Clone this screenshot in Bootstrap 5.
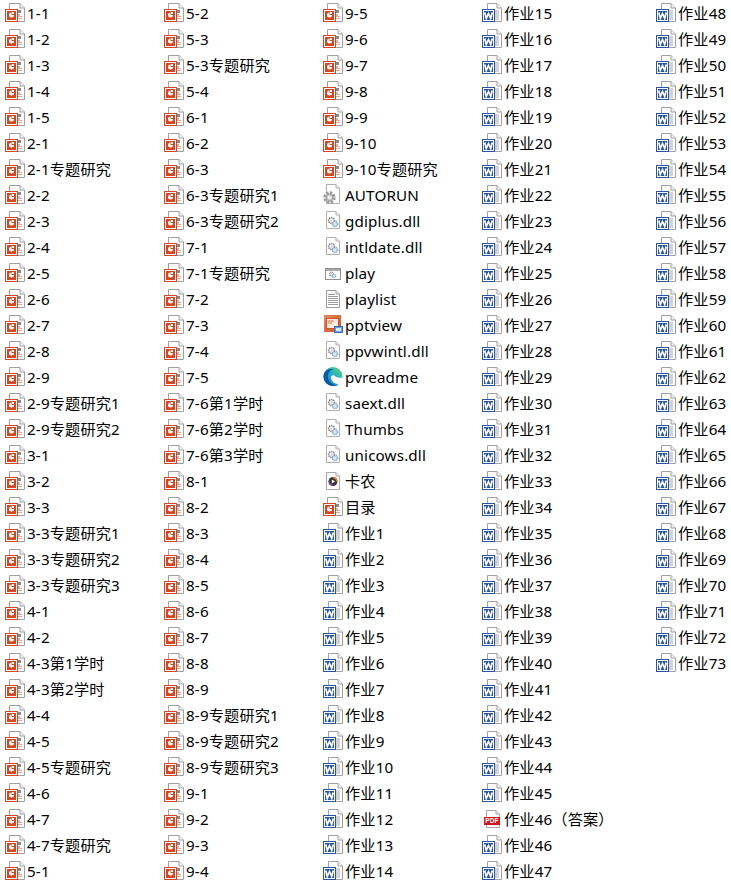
<!DOCTYPE html>
<html lang="zh">
<head>
<meta charset="utf-8">
<title>文件列表</title>
<link href="https://cdn.jsdelivr.net/npm/bootstrap@5.3.0/dist/css/bootstrap.min.css" rel="stylesheet">
<style>
html,body{margin:0;background:#fff;overflow:hidden}
.sheet{width:731px;height:884px;padding-top:1px;font:15.2px/24px "Noto Sans","Noto Sans CJK SC",sans-serif;letter-spacing:.15px;color:#000}
.lane{width:159px;flex:none}
.lane-wide{width:174px}
.lane-last{width:80px}
.entry{height:26px;white-space:nowrap}
.glyph{width:24px;height:26px;flex:none;margin-left:3px}
</style>
</head>
<body>
<svg width="0" height="0" class="position-absolute">
<defs>
<symbol id="sp" viewBox="0 0 24 26"><path d="M6.500 2.500H17L21.500 7V20.500H6.500Z" fill="#fff" stroke="#a0a0a0"/><path d="M17 2.500V7H21.500" fill="#f3f3f3" stroke="#a0a0a0"/><rect x="15" y="9" width="3" height="3" fill="#8a8a8a"/><rect x="15" y="13" width="2" height="2" fill="#bbb"/><rect x="15" y="15" width="4" height="1" fill="#eda58e"/><rect x="15" y="17" width="4" height="1" fill="#eda58e"/><rect x="2.500" y="8.500" width="12" height="12" fill="#fff" stroke="#d24726"/><rect x="4" y="10" width="9" height="9" fill="#d24726"/><circle cx="8.500" cy="14" r="2.500" fill="#fff"/><path d="M8.500 14V11.500H11V14Z" fill="#d24726"/><rect x="9" y="11" width="2" height="2" fill="#fff"/></symbol>
<symbol id="wd" viewBox="0 0 24 26"><path d="M7.500 2.500H17L21.500 7V20.500H7.500Z" fill="#fff" stroke="#a0a0a0"/><path d="M17 2.500V7H21.500" fill="#f3f3f3" stroke="#a0a0a0"/><path d="M15 10h4M15 12h4M15 14h4M15 16h4M15 18h4" stroke="#a6a6a6"/><rect x="2.500" y="8.500" width="12" height="12" fill="#fff" stroke="#2b579a"/><rect x="4" y="10" width="9" height="9" fill="#2b579a"/><path d="M4.800 11.500 6.300 17.500 8.500 12.500 10.700 17.500 12.200 11.500" fill="none" stroke="#fff" stroke-width="1.700"/></symbol>
<symbol id="dl" viewBox="0 0 24 26"><path d="M5.500 2.500H15L18.500 6V19.500H5.500Z" fill="#fff" stroke="#b0b0b0"/><path d="M15 2.500V6H18.500" fill="#eee" stroke="#b0b0b0"/><circle cx="10.500" cy="11.500" r="3" fill="#e4e4e4" stroke="#8f8f8f" stroke-width="1.500" stroke-dasharray="1.500 .7"/><circle cx="14" cy="15" r="2.500" fill="#dcebf7" stroke="#7fa6c4" stroke-width="1.400" stroke-dasharray="1.400 .6"/></symbol>
<symbol id="au" viewBox="0 0 24 26"><path d="M5.500 1.500H15L18.500 5V20.500H5.500Z" fill="#fff" stroke="#b0b0b0"/><path d="M15 1.500V5H18.500" fill="#eee" stroke="#b0b0b0"/><circle cx="8.500" cy="14.500" r="4.500" fill="#c4c4c4" stroke="#9c9c9c" stroke-width="3.500" stroke-dasharray="2.200 1.300"/><circle cx="8.500" cy="14.500" r="1.700" fill="#f4f4f4"/></symbol>
<symbol id="wn" viewBox="0 0 24 26"><rect x="4.500" y="7.500" width="15" height="11" fill="#fff" stroke="#8f8f8f"/><rect x="5" y="8" width="14" height="2" fill="#a9a9a9"/><circle cx="10.500" cy="13" r="2" fill="#e4e4e4" stroke="#8f8f8f" stroke-width="1.200" stroke-dasharray="1.200 .6"/><circle cx="13" cy="15" r="1.700" fill="#dcebf7" stroke="#7fa6c4" stroke-width="1.100" stroke-dasharray="1.100 .5"/></symbol>
<symbol id="tx" viewBox="0 0 24 26"><path d="M5.500 3.500H15L18.500 7V20.500H5.500Z" fill="#fff" stroke="#9c9c9c"/><path d="M15 3.500V7H18.500" fill="#eee" stroke="#9c9c9c"/><path d="M7 7.500H14M7 9.500H17M7 11.500H17M7 13.500H17M7 15.500H17M7 17.500H17" stroke="#9a9a9a"/></symbol>
<symbol id="pv" viewBox="0 0 24 26"><defs><linearGradient id="pvbg" x1="0" y1="0" x2="1" y2="1"><stop offset="0" stop-color="#e58a5c"/><stop offset="1" stop-color="#c9532b"/></linearGradient></defs><rect x="3" y="2" width="17" height="17" fill="url(#pvbg)"/><rect x="5.500" y="5.500" width="12" height="10" fill="#fbe9df" stroke="#c9532b"/><path d="M7 8H13M7 10H11" stroke="#d9764e"/><rect x="13.500" y="13.500" width="8" height="6" fill="#6f9fd8" stroke="#3c6fb0"/><rect x="15" y="15" width="5" height="3" fill="#dbe8f7"/></symbol>
<symbol id="eg" viewBox="0 0 24 26"><defs><linearGradient id="egtop" x1="0" y1="1" x2="1" y2="0"><stop offset="0" stop-color="#0f7fcf"/><stop offset=".6" stop-color="#2ab3c0"/><stop offset="1" stop-color="#6fd84f"/></linearGradient></defs><circle cx="12" cy="11.500" r="9.500" fill="url(#egtop)"/><path d="M2.500 11.500C3 6 8 3 12.500 4.500 9 5 6.500 8 7 12.500 7.500 17 12 20.500 17 20 14.500 21.500 10 21.500 7 19.500 4 17.500 2.500 15 2.500 11.500Z" fill="#0c59a4"/><path d="M10 12.500C10 10.800 11.500 10 13.500 10.500 14.500 11.500 16 13.500 21.600 12.500 21.500 15 20 17.500 18 19 14.500 19.500 10 16.500 10 12.500Z" fill="#fff"/></symbol>
<symbol id="md" viewBox="0 0 24 26"><path d="M5.500 3.500H15L18.500 7V20.500H5.500Z" fill="#fff" stroke="#a8a8a8"/><path d="M15 3.500V7H18.500" fill="#eee" stroke="#a8a8a8"/><circle cx="12" cy="12.500" r="4.500" fill="#333"/><path d="M12 8A4.500 4.500 0 0 1 16.500 12.500H15A3 3 0 0 0 12 9.500Z" fill="#e8772e"/><path d="M7.500 12.500A4.500 4.500 0 0 0 12 17V15.500A3 3 0 0 1 9 12.500Z" fill="#8a4aa0"/><path d="M10.800 10.500 14.200 12.500 10.800 14.500Z" fill="#fff"/></symbol>
<symbol id="pf" viewBox="0 0 24 26"><path d="M6.500 3.500H16L19.500 7V20.500H6.500Z" fill="#fff" stroke="#a8a8a8"/><path d="M16 3.500V7H19.500" fill="#eee" stroke="#a8a8a8"/><rect x="4" y="10" width="16" height="8" fill="#d3161c"/><text x="12" y="16.300" text-anchor="middle" font-family="Liberation Sans,sans-serif" font-size="6.500" font-weight="700" fill="#fff">PDF</text></symbol>
</defs>
</svg>
<main class="sheet d-flex">
<section class="lane d-flex flex-column">
<div class="entry d-flex"><svg class="glyph"><use href="#sp"/></svg>1-1</div>
<div class="entry d-flex"><svg class="glyph"><use href="#sp"/></svg>1-2</div>
<div class="entry d-flex"><svg class="glyph"><use href="#sp"/></svg>1-3</div>
<div class="entry d-flex"><svg class="glyph"><use href="#sp"/></svg>1-4</div>
<div class="entry d-flex"><svg class="glyph"><use href="#sp"/></svg>1-5</div>
<div class="entry d-flex"><svg class="glyph"><use href="#sp"/></svg>2-1</div>
<div class="entry d-flex"><svg class="glyph"><use href="#sp"/></svg>2-1专题研究</div>
<div class="entry d-flex"><svg class="glyph"><use href="#sp"/></svg>2-2</div>
<div class="entry d-flex"><svg class="glyph"><use href="#sp"/></svg>2-3</div>
<div class="entry d-flex"><svg class="glyph"><use href="#sp"/></svg>2-4</div>
<div class="entry d-flex"><svg class="glyph"><use href="#sp"/></svg>2-5</div>
<div class="entry d-flex"><svg class="glyph"><use href="#sp"/></svg>2-6</div>
<div class="entry d-flex"><svg class="glyph"><use href="#sp"/></svg>2-7</div>
<div class="entry d-flex"><svg class="glyph"><use href="#sp"/></svg>2-8</div>
<div class="entry d-flex"><svg class="glyph"><use href="#sp"/></svg>2-9</div>
<div class="entry d-flex"><svg class="glyph"><use href="#sp"/></svg>2-9专题研究1</div>
<div class="entry d-flex"><svg class="glyph"><use href="#sp"/></svg>2-9专题研究2</div>
<div class="entry d-flex"><svg class="glyph"><use href="#sp"/></svg>3-1</div>
<div class="entry d-flex"><svg class="glyph"><use href="#sp"/></svg>3-2</div>
<div class="entry d-flex"><svg class="glyph"><use href="#sp"/></svg>3-3</div>
<div class="entry d-flex"><svg class="glyph"><use href="#sp"/></svg>3-3专题研究1</div>
<div class="entry d-flex"><svg class="glyph"><use href="#sp"/></svg>3-3专题研究2</div>
<div class="entry d-flex"><svg class="glyph"><use href="#sp"/></svg>3-3专题研究3</div>
<div class="entry d-flex"><svg class="glyph"><use href="#sp"/></svg>4-1</div>
<div class="entry d-flex"><svg class="glyph"><use href="#sp"/></svg>4-2</div>
<div class="entry d-flex"><svg class="glyph"><use href="#sp"/></svg>4-3第1学时</div>
<div class="entry d-flex"><svg class="glyph"><use href="#sp"/></svg>4-3第2学时</div>
<div class="entry d-flex"><svg class="glyph"><use href="#sp"/></svg>4-4</div>
<div class="entry d-flex"><svg class="glyph"><use href="#sp"/></svg>4-5</div>
<div class="entry d-flex"><svg class="glyph"><use href="#sp"/></svg>4-5专题研究</div>
<div class="entry d-flex"><svg class="glyph"><use href="#sp"/></svg>4-6</div>
<div class="entry d-flex"><svg class="glyph"><use href="#sp"/></svg>4-7</div>
<div class="entry d-flex"><svg class="glyph"><use href="#sp"/></svg>4-7专题研究</div>
<div class="entry d-flex"><svg class="glyph"><use href="#sp"/></svg>5-1</div>
</section>
<section class="lane d-flex flex-column">
<div class="entry d-flex"><svg class="glyph"><use href="#sp"/></svg>5-2</div>
<div class="entry d-flex"><svg class="glyph"><use href="#sp"/></svg>5-3</div>
<div class="entry d-flex"><svg class="glyph"><use href="#sp"/></svg>5-3专题研究</div>
<div class="entry d-flex"><svg class="glyph"><use href="#sp"/></svg>5-4</div>
<div class="entry d-flex"><svg class="glyph"><use href="#sp"/></svg>6-1</div>
<div class="entry d-flex"><svg class="glyph"><use href="#sp"/></svg>6-2</div>
<div class="entry d-flex"><svg class="glyph"><use href="#sp"/></svg>6-3</div>
<div class="entry d-flex"><svg class="glyph"><use href="#sp"/></svg>6-3专题研究1</div>
<div class="entry d-flex"><svg class="glyph"><use href="#sp"/></svg>6-3专题研究2</div>
<div class="entry d-flex"><svg class="glyph"><use href="#sp"/></svg>7-1</div>
<div class="entry d-flex"><svg class="glyph"><use href="#sp"/></svg>7-1专题研究</div>
<div class="entry d-flex"><svg class="glyph"><use href="#sp"/></svg>7-2</div>
<div class="entry d-flex"><svg class="glyph"><use href="#sp"/></svg>7-3</div>
<div class="entry d-flex"><svg class="glyph"><use href="#sp"/></svg>7-4</div>
<div class="entry d-flex"><svg class="glyph"><use href="#sp"/></svg>7-5</div>
<div class="entry d-flex"><svg class="glyph"><use href="#sp"/></svg>7-6第1学时</div>
<div class="entry d-flex"><svg class="glyph"><use href="#sp"/></svg>7-6第2学时</div>
<div class="entry d-flex"><svg class="glyph"><use href="#sp"/></svg>7-6第3学时</div>
<div class="entry d-flex"><svg class="glyph"><use href="#sp"/></svg>8-1</div>
<div class="entry d-flex"><svg class="glyph"><use href="#sp"/></svg>8-2</div>
<div class="entry d-flex"><svg class="glyph"><use href="#sp"/></svg>8-3</div>
<div class="entry d-flex"><svg class="glyph"><use href="#sp"/></svg>8-4</div>
<div class="entry d-flex"><svg class="glyph"><use href="#sp"/></svg>8-5</div>
<div class="entry d-flex"><svg class="glyph"><use href="#sp"/></svg>8-6</div>
<div class="entry d-flex"><svg class="glyph"><use href="#sp"/></svg>8-7</div>
<div class="entry d-flex"><svg class="glyph"><use href="#sp"/></svg>8-8</div>
<div class="entry d-flex"><svg class="glyph"><use href="#sp"/></svg>8-9</div>
<div class="entry d-flex"><svg class="glyph"><use href="#sp"/></svg>8-9专题研究1</div>
<div class="entry d-flex"><svg class="glyph"><use href="#sp"/></svg>8-9专题研究2</div>
<div class="entry d-flex"><svg class="glyph"><use href="#sp"/></svg>8-9专题研究3</div>
<div class="entry d-flex"><svg class="glyph"><use href="#sp"/></svg>9-1</div>
<div class="entry d-flex"><svg class="glyph"><use href="#sp"/></svg>9-2</div>
<div class="entry d-flex"><svg class="glyph"><use href="#sp"/></svg>9-3</div>
<div class="entry d-flex"><svg class="glyph"><use href="#sp"/></svg>9-4</div>
</section>
<section class="lane d-flex flex-column">
<div class="entry d-flex"><svg class="glyph"><use href="#sp"/></svg>9-5</div>
<div class="entry d-flex"><svg class="glyph"><use href="#sp"/></svg>9-6</div>
<div class="entry d-flex"><svg class="glyph"><use href="#sp"/></svg>9-7</div>
<div class="entry d-flex"><svg class="glyph"><use href="#sp"/></svg>9-8</div>
<div class="entry d-flex"><svg class="glyph"><use href="#sp"/></svg>9-9</div>
<div class="entry d-flex"><svg class="glyph"><use href="#sp"/></svg>9-10</div>
<div class="entry d-flex"><svg class="glyph"><use href="#sp"/></svg>9-10专题研究</div>
<div class="entry d-flex"><svg class="glyph"><use href="#au"/></svg>AUTORUN</div>
<div class="entry d-flex"><svg class="glyph"><use href="#dl"/></svg>gdiplus.dll</div>
<div class="entry d-flex"><svg class="glyph"><use href="#dl"/></svg>intldate.dll</div>
<div class="entry d-flex"><svg class="glyph"><use href="#wn"/></svg>play</div>
<div class="entry d-flex"><svg class="glyph"><use href="#tx"/></svg>playlist</div>
<div class="entry d-flex"><svg class="glyph"><use href="#pv"/></svg>pptview</div>
<div class="entry d-flex"><svg class="glyph"><use href="#dl"/></svg>ppvwintl.dll</div>
<div class="entry d-flex"><svg class="glyph"><use href="#eg"/></svg>pvreadme</div>
<div class="entry d-flex"><svg class="glyph"><use href="#dl"/></svg>saext.dll</div>
<div class="entry d-flex"><svg class="glyph"><use href="#dl"/></svg>Thumbs</div>
<div class="entry d-flex"><svg class="glyph"><use href="#dl"/></svg>unicows.dll</div>
<div class="entry d-flex"><svg class="glyph"><use href="#md"/></svg>卡农</div>
<div class="entry d-flex"><svg class="glyph"><use href="#sp"/></svg>目录</div>
<div class="entry d-flex"><svg class="glyph"><use href="#wd"/></svg>作业1</div>
<div class="entry d-flex"><svg class="glyph"><use href="#wd"/></svg>作业2</div>
<div class="entry d-flex"><svg class="glyph"><use href="#wd"/></svg>作业3</div>
<div class="entry d-flex"><svg class="glyph"><use href="#wd"/></svg>作业4</div>
<div class="entry d-flex"><svg class="glyph"><use href="#wd"/></svg>作业5</div>
<div class="entry d-flex"><svg class="glyph"><use href="#wd"/></svg>作业6</div>
<div class="entry d-flex"><svg class="glyph"><use href="#wd"/></svg>作业7</div>
<div class="entry d-flex"><svg class="glyph"><use href="#wd"/></svg>作业8</div>
<div class="entry d-flex"><svg class="glyph"><use href="#wd"/></svg>作业9</div>
<div class="entry d-flex"><svg class="glyph"><use href="#wd"/></svg>作业10</div>
<div class="entry d-flex"><svg class="glyph"><use href="#wd"/></svg>作业11</div>
<div class="entry d-flex"><svg class="glyph"><use href="#wd"/></svg>作业12</div>
<div class="entry d-flex"><svg class="glyph"><use href="#wd"/></svg>作业13</div>
<div class="entry d-flex"><svg class="glyph"><use href="#wd"/></svg>作业14</div>
</section>
<section class="lane lane-wide d-flex flex-column">
<div class="entry d-flex"><svg class="glyph"><use href="#wd"/></svg>作业15</div>
<div class="entry d-flex"><svg class="glyph"><use href="#wd"/></svg>作业16</div>
<div class="entry d-flex"><svg class="glyph"><use href="#wd"/></svg>作业17</div>
<div class="entry d-flex"><svg class="glyph"><use href="#wd"/></svg>作业18</div>
<div class="entry d-flex"><svg class="glyph"><use href="#wd"/></svg>作业19</div>
<div class="entry d-flex"><svg class="glyph"><use href="#wd"/></svg>作业20</div>
<div class="entry d-flex"><svg class="glyph"><use href="#wd"/></svg>作业21</div>
<div class="entry d-flex"><svg class="glyph"><use href="#wd"/></svg>作业22</div>
<div class="entry d-flex"><svg class="glyph"><use href="#wd"/></svg>作业23</div>
<div class="entry d-flex"><svg class="glyph"><use href="#wd"/></svg>作业24</div>
<div class="entry d-flex"><svg class="glyph"><use href="#wd"/></svg>作业25</div>
<div class="entry d-flex"><svg class="glyph"><use href="#wd"/></svg>作业26</div>
<div class="entry d-flex"><svg class="glyph"><use href="#wd"/></svg>作业27</div>
<div class="entry d-flex"><svg class="glyph"><use href="#wd"/></svg>作业28</div>
<div class="entry d-flex"><svg class="glyph"><use href="#wd"/></svg>作业29</div>
<div class="entry d-flex"><svg class="glyph"><use href="#wd"/></svg>作业30</div>
<div class="entry d-flex"><svg class="glyph"><use href="#wd"/></svg>作业31</div>
<div class="entry d-flex"><svg class="glyph"><use href="#wd"/></svg>作业32</div>
<div class="entry d-flex"><svg class="glyph"><use href="#wd"/></svg>作业33</div>
<div class="entry d-flex"><svg class="glyph"><use href="#wd"/></svg>作业34</div>
<div class="entry d-flex"><svg class="glyph"><use href="#wd"/></svg>作业35</div>
<div class="entry d-flex"><svg class="glyph"><use href="#wd"/></svg>作业36</div>
<div class="entry d-flex"><svg class="glyph"><use href="#wd"/></svg>作业37</div>
<div class="entry d-flex"><svg class="glyph"><use href="#wd"/></svg>作业38</div>
<div class="entry d-flex"><svg class="glyph"><use href="#wd"/></svg>作业39</div>
<div class="entry d-flex"><svg class="glyph"><use href="#wd"/></svg>作业40</div>
<div class="entry d-flex"><svg class="glyph"><use href="#wd"/></svg>作业41</div>
<div class="entry d-flex"><svg class="glyph"><use href="#wd"/></svg>作业42</div>
<div class="entry d-flex"><svg class="glyph"><use href="#wd"/></svg>作业43</div>
<div class="entry d-flex"><svg class="glyph"><use href="#wd"/></svg>作业44</div>
<div class="entry d-flex"><svg class="glyph"><use href="#wd"/></svg>作业45</div>
<div class="entry d-flex"><svg class="glyph"><use href="#pf"/></svg>作业46（答案）</div>
<div class="entry d-flex"><svg class="glyph"><use href="#wd"/></svg>作业46</div>
<div class="entry d-flex"><svg class="glyph"><use href="#wd"/></svg>作业47</div>
</section>
<section class="lane lane-last d-flex flex-column">
<div class="entry d-flex"><svg class="glyph"><use href="#wd"/></svg>作业48</div>
<div class="entry d-flex"><svg class="glyph"><use href="#wd"/></svg>作业49</div>
<div class="entry d-flex"><svg class="glyph"><use href="#wd"/></svg>作业50</div>
<div class="entry d-flex"><svg class="glyph"><use href="#wd"/></svg>作业51</div>
<div class="entry d-flex"><svg class="glyph"><use href="#wd"/></svg>作业52</div>
<div class="entry d-flex"><svg class="glyph"><use href="#wd"/></svg>作业53</div>
<div class="entry d-flex"><svg class="glyph"><use href="#wd"/></svg>作业54</div>
<div class="entry d-flex"><svg class="glyph"><use href="#wd"/></svg>作业55</div>
<div class="entry d-flex"><svg class="glyph"><use href="#wd"/></svg>作业56</div>
<div class="entry d-flex"><svg class="glyph"><use href="#wd"/></svg>作业57</div>
<div class="entry d-flex"><svg class="glyph"><use href="#wd"/></svg>作业58</div>
<div class="entry d-flex"><svg class="glyph"><use href="#wd"/></svg>作业59</div>
<div class="entry d-flex"><svg class="glyph"><use href="#wd"/></svg>作业60</div>
<div class="entry d-flex"><svg class="glyph"><use href="#wd"/></svg>作业61</div>
<div class="entry d-flex"><svg class="glyph"><use href="#wd"/></svg>作业62</div>
<div class="entry d-flex"><svg class="glyph"><use href="#wd"/></svg>作业63</div>
<div class="entry d-flex"><svg class="glyph"><use href="#wd"/></svg>作业64</div>
<div class="entry d-flex"><svg class="glyph"><use href="#wd"/></svg>作业65</div>
<div class="entry d-flex"><svg class="glyph"><use href="#wd"/></svg>作业66</div>
<div class="entry d-flex"><svg class="glyph"><use href="#wd"/></svg>作业67</div>
<div class="entry d-flex"><svg class="glyph"><use href="#wd"/></svg>作业68</div>
<div class="entry d-flex"><svg class="glyph"><use href="#wd"/></svg>作业69</div>
<div class="entry d-flex"><svg class="glyph"><use href="#wd"/></svg>作业70</div>
<div class="entry d-flex"><svg class="glyph"><use href="#wd"/></svg>作业71</div>
<div class="entry d-flex"><svg class="glyph"><use href="#wd"/></svg>作业72</div>
<div class="entry d-flex"><svg class="glyph"><use href="#wd"/></svg>作业73</div>
</section>
</main>
<script src="https://cdn.jsdelivr.net/npm/bootstrap@5.3.0/dist/js/bootstrap.bundle.min.js"></script>
</body>
</html>
